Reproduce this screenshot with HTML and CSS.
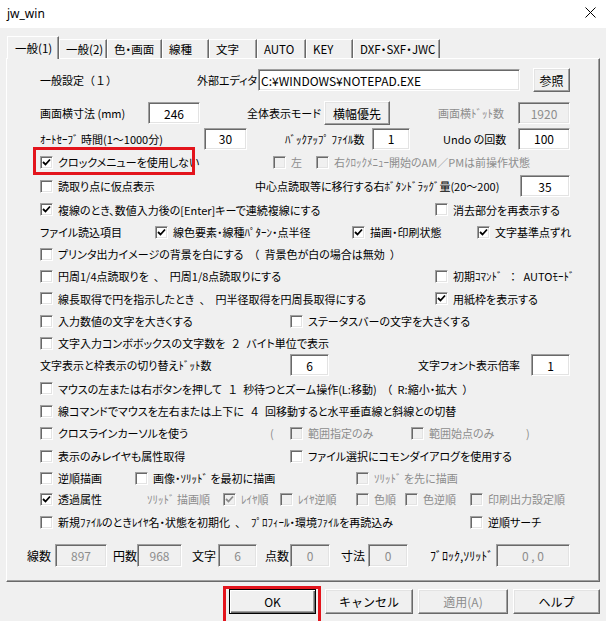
FILE: index.html
```html
<!DOCTYPE html>
<html lang="ja">
<head>
    <meta charset="UTF-8">
    <title>jw_win</title>
    <link rel="stylesheet" href="styles.css">
</head>
<body>

<div class="titlebar">
    <span class="title">jw_win</span>
    <svg class="close" width="11" height="11" viewBox="0 0 11 11"><path d="M0.5 0.5 L10.5 10.5 M10.5 0.5 L0.5 10.5" stroke="#000" stroke-width="1"/></svg>
</div>

<div class="dialog">
    <div class="tabs">
        <div class="tab on t1">一般(1)</div>
        <div class="tab t2">一般(2)</div>
        <div class="tab t3">色・画面</div>
        <div class="tab t4">線種</div>
        <div class="tab t5">文字</div>
        <div class="tab t6">AUTO</div>
        <div class="tab t7">KEY</div>
        <div class="tab t8">DXF・SXF・JWC</div>
    </div>

    <div class="panel">
        <!-- row 1 -->
        <div class="row r1">
            <span class="wide">一般設定（１）</span>
            <span>外部エディタ</span>
            <input class="tb left w-editor" type="text" value="C:¥WINDOWS¥NOTEPAD.EXE">
            <button class="btn w-ref">参照</button>
        </div>

        <div class="row r2">
            <span>画面横寸法 (mm)</span>
            <input class="tb w52" type="text" value="246">
            <span>全体表示モード</span>
            <button class="btn w-wide">横幅優先</button>
            <span class="gray">画面横ﾄﾞｯﾄ数</span>
            <input class="tb dis w52" type="text" value="1920" disabled>
        </div>

        <div class="row r3 h23">
            <span>ｵｰﾄｾｰﾌﾞ 時間(1～1000分)</span>
            <input class="tb w43" type="text" value="30">
            <span>ﾊﾞｯｸｱｯﾌﾟ ﾌｧｲﾙ数</span>
            <input class="tb w38" type="text" value="1">
            <span>Undo の回数</span>
            <input class="tb w52" type="text" value="100">
        </div>

        <div class="row r4 h24">
            <label class="chk"><span class="cb"><svg viewBox="0 0 11 11"><polyline points="2,5 4.5,7.5 9,2.5"/></svg></span>クロックメニューを使用しない</label>
            <label class="chk gray"><span class="cb dis"></span>左</label>
            <label class="chk gray"><span class="cb dis"></span>右ｸﾛｯｸﾒﾆｭｰ開始のAM／PMは前操作状態</label>
            <div class="mark mark-clock"></div>
        </div>

        <div class="row r5 h24">
            <label class="chk"><span class="cb"></span>読取り点に仮点表示</label>
            <span>中心点読取等に移行する右ﾎﾞﾀﾝﾄﾞﾗｯｸﾞ量(20～200)</span>
            <input class="tb w50" type="text" value="35">
        </div>

        <div class="row r-right h23">
            <label class="chk"><span class="cb"><svg viewBox="0 0 11 11"><polyline points="2,5 4.5,7.5 9,2.5"/></svg></span>複線のとき、数値入力後の[Enter]キーで連続複線にする</label>
            <label class="chk"><span class="cb"></span>消去部分を再表示する</label>
        </div>

        <div class="row r7">
            <span>ファイル読込項目</span>
            <label class="chk"><span class="cb"><svg viewBox="0 0 11 11"><polyline points="2,5 4.5,7.5 9,2.5"/></svg></span>線色要素・線種ﾊﾟﾀｰﾝ・点半径</label>
            <label class="chk"><span class="cb"><svg viewBox="0 0 11 11"><polyline points="2,5 4.5,7.5 9,2.5"/></svg></span>描画・印刷状態</label>
            <label class="chk"><span class="cb"><svg viewBox="0 0 11 11"><polyline points="2,5 4.5,7.5 9,2.5"/></svg></span>文字基準点ずれ</label>
        </div>

        <div class="row">
            <label class="chk"><span class="cb"></span>プリンタ出力イメージの背景を白にする<span class="wide">（</span>背景色が白の場合は無効<span class="wide">）</span></label>
        </div>

        <div class="row r-right">
            <label class="chk"><span class="cb"></span>円周1/4点読取りを<span class="wide">、</span>円周1/8点読取りにする</label>
            <label class="chk"><span class="cb"></span>初期ｺﾏﾝﾄﾞ <span class="wide">：</span>AUTOﾓｰﾄﾞ</label>
        </div>

        <div class="row r-right h23">
            <label class="chk"><span class="cb"></span>線長取得で円を指示したとき<span class="wide">、</span>円半径取得を円周長取得にする</label>
            <label class="chk"><span class="cb"><svg viewBox="0 0 11 11"><polyline points="2,5 4.5,7.5 9,2.5"/></svg></span>用紙枠を表示する</label>
        </div>

        <div class="row r-mid">
            <label class="chk"><span class="cb"></span>入力数値の文字を大きくする</label>
            <label class="chk"><span class="cb"></span>ステータスバーの文字を大きくする</label>
        </div>

        <div class="row">
            <label class="chk"><span class="cb"></span>文字入力コンボボックスの文字数を<span class="wide">２</span>バイト単位で表示</label>
        </div>

        <div class="row r13">
            <span>文字表示と枠表示の切り替えﾄﾞｯﾄ数</span>
            <input class="tb w39" type="text" value="6">
            <span>文字フォント表示倍率</span>
            <input class="tb w39" type="text" value="1">
        </div>

        <div class="row h25">
            <label class="chk"><span class="cb"></span>マウスの左または右ボタンを押して<span class="wide">１</span>秒待つとズーム操作(L:移動)<span class="wide">（</span>R:縮小・拡大<span class="wide">）</span></label>
        </div>

        <div class="row h20">
            <label class="chk"><span class="cb"></span>線コマンドでマウスを左右または上下に<span class="wide">４</span>回移動すると水平垂直線と斜線との切替</label>
        </div>

        <div class="row r16 h24">
            <label class="chk"><span class="cb"></span>クロスラインカーソルを使う</label>
            <span class="gray">(</span>
            <label class="chk gray"><span class="cb dis"></span>範囲指定のみ</label>
            <label class="chk gray"><span class="cb dis"></span>範囲始点のみ</label>
            <span class="gray">)</span>
        </div>

        <div class="row r-mid">
            <label class="chk"><span class="cb"></span>表示のみレイヤも属性取得</label>
            <label class="chk"><span class="cb"></span>ファイル選択にコモンダイアログを使用する</label>
        </div>

        <div class="row r18">
            <label class="chk"><span class="cb"></span>逆順描画</label>
            <label class="chk"><span class="cb"></span>画像・ｿﾘｯﾄﾞ を最初に描画</label>
            <label class="chk gray"><span class="cb dis"></span>ｿﾘｯﾄﾞ を先に描画</label>
        </div>

        <div class="row r19 h20">
            <label class="chk"><span class="cb"><svg viewBox="0 0 11 11"><polyline points="2,5 4.5,7.5 9,2.5"/></svg></span>透過属性</label>
            <span class="gray">ｿﾘｯﾄﾞ 描画順</span>
            <label class="chk gray"><span class="cb dis"><svg viewBox="0 0 11 11"><polyline points="2,5 4.5,7.5 9,2.5"/></svg></span>ﾚｲﾔ順</label>
            <label class="chk gray"><span class="cb dis"></span>ﾚｲﾔ逆順</label>
            <label class="chk gray"><span class="cb dis"></span>色順</label>
            <label class="chk gray"><span class="cb dis"></span>色逆順</label>
            <label class="chk gray"><span class="cb dis"></span>印刷出力設定順</label>
        </div>

        <div class="row r20 h26">
            <label class="chk"><span class="cb"></span>新規ﾌｧｲﾙのときﾚｲﾔ名・状態を初期化<span class="wide">、</span>ﾌﾟﾛﾌｨｰﾙ・環境ﾌｧｲﾙを再読込み</label>
            <label class="chk"><span class="cb"></span>逆順サーチ</label>
        </div>

        <!-- counters -->
        <div class="row stats h23">
            <span>線数</span>
            <input class="tb dis w52" type="text" value="897" disabled>
            <span>円数</span>
            <input class="tb dis w45" type="text" value="968" disabled>
            <span>文字</span>
            <input class="tb dis w39" type="text" value="6" disabled>
            <span>点数</span>
            <input class="tb dis w40" type="text" value="0" disabled>
            <span>寸法</span>
            <input class="tb dis w40" type="text" value="0" disabled>
            <span>ﾌﾞﾛｯｸ,ｿﾘｯﾄﾞ</span>
            <input class="tb dis w74" type="text" value="0 , 0" disabled>
        </div>
    </div>

    <div class="buttons">
        <div class="ok-wrap">
            <button class="btn def">OK</button>
            <div class="mark mark-ok"></div>
        </div>
        <button class="btn">キャンセル</button>
        <button class="btn" disabled>適用(A)</button>
        <button class="btn">ヘルプ</button>
    </div>
</div>

</body>
</html>
```

FILE: styles.css
```css
body {
    margin: 0;
    width: 606px;
    height: 621px;
    overflow: hidden;
    background-color: #f0f0f0;
    font-family: "Noto Sans CJK JP", sans-serif;
    font-size: 11px;
    font-feature-settings: "palt";
    color: #000;
}

/* full-width punctuation keeps its full width, as in the dialog font */
.wide {
    font-feature-settings: normal;
}

/* Title bar */
.titlebar {
    height: 28px;
    background-color: #fff;
    display: flex;
    align-items: center;
    justify-content: space-between;
    padding: 0 10px 2px 7px;
    box-sizing: border-box;
}

.title {
    font-family: "Noto Sans", sans-serif;
    font-size: 12px;
}

.close {
    margin-top: -2px;
}

.dialog {
    padding: 8px 0 0 6px;
}

/* Tabs */
.tabs {
    display: flex;
    align-items: flex-end;
    height: 22px;
    margin-left: 1px;
    font-size: 11.5px;
}

.tab {
    height: 19px;
    line-height: 18px;
    box-sizing: border-box;
    padding-left: 6px;
    border-top: 1px solid #fff;
    border-left: 1px solid #fff;
    border-right: 1px solid #696969;
    box-shadow: inset -1px 0 #a0a0a0;
    white-space: nowrap;
}

.tab.on {
    height: 23px;
    line-height: 22px;
    margin-bottom: -1px;
    padding-left: 7px;
    background-color: #f0f0f0;
    position: relative;
    z-index: 1;
}

.t1 { width: 52px; }
.t2 { width: 48px; }
.t3 { width: 55px; }
.t4 { width: 47px; }
.t5 { width: 48px; }
.t6 { width: 49px; }
.t7 { width: 47px; }
.t8 { width: 87px; }

/* Tab page */
.panel {
    width: 594px;
    box-sizing: border-box;
    border-top: 1px solid #fff;
    border-left: 1px solid #fff;
    border-right: 1px solid #696969;
    border-bottom: 1px solid #696969;
    box-shadow: inset -1px -1px #a0a0a0;
    padding: 9px 0 14px 33px;
}

.row {
    height: 22px;
    display: flex;
    align-items: center;
    white-space: nowrap;
    position: relative;
}

.row > * {
    flex: none;
}

.h20 { height: 20px; }
.h23 { height: 23px; }
.h24 { height: 24px; }
.h25 { height: 25px; }
.h26 { height: 26px; }

/* rows laid out as columns */
.r1, .r2, .r3, .r4, .r5, .r-right, .r7, .r-mid, .r13, .r16, .r18, .r19, .r20, .stats {
    display: grid;
    align-items: center;
}

.r1 { grid-template-columns: 157px 61px 275px auto; }
.r2 { grid-template-columns: 108px 99px 77px 114px 80px auto; margin-top: 11px; }
.r3 { grid-template-columns: 164px 81px 87px 71px 75px auto; margin-top: 4px; }
.r4 { grid-template-columns: 233px 43px auto; }
.r5 { grid-template-columns: 215px 265px auto; }
.r-right { grid-template-columns: 395px auto; }
.r7 { grid-template-columns: 115px 197px 125px auto; }
.r-mid { grid-template-columns: 250px auto; }
.r13 { grid-template-columns: 250px 128px 113px auto; }
.r16 { grid-template-columns: 230px 20px 121px 115px auto; }
.r18 { grid-template-columns: 95px 221px auto; }
.r19 { grid-template-columns: 107px 76px 57px 76px 49px 65px auto; }
.r20 { grid-template-columns: 430px auto; }

.stats {
    grid-template-columns: 28px 58px 24px 55px 26px 47px 25px 51px 27px 62px 66px auto;
    margin-left: -13px;
    margin-top: 9px;
    font-size: 12px;
}

.gray {
    color: #8d8d8d;
}

/* Checkboxes */
.chk {
    display: flex;
    align-items: center;
    gap: 5px;
}

.cb {
    width: 13px;
    height: 13px;
    box-sizing: border-box;
    background-color: #fff;
    border: 1px solid;
    border-color: #a0a0a0 #fff #fff #a0a0a0;
    box-shadow: inset 1px 1px #696969, inset -1px -1px #e3e3e3;
    flex: none;
}

.cb svg {
    display: block;
    width: 11px;
    height: 11px;
}

.cb polyline {
    fill: none;
    stroke: #000;
    stroke-width: 1.8;
}

.cb.dis {
    background-color: #f0f0f0;
}

.cb.dis polyline {
    stroke: #8d8d8d;
}

/* Text boxes */
.tb {
    height: 22px;
    box-sizing: border-box;
    margin: 0;
    padding: 0 3px;
    background-color: #fff;
    border: 1px solid;
    border-color: #a0a0a0 #fff #fff #a0a0a0;
    box-shadow: inset 1px 1px #696969, inset -1px -1px #e3e3e3;
    font-family: inherit;
    font-size: 12px;
    color: #000;
    text-align: center;
    outline: none;
}

.tb.left {
    text-align: left;
    padding-left: 2px;
}

.tb.dis {
    background-color: #f0f0f0;
    color: #8d8d8d;
}

.w-editor { width: 262px; }
.w38 { width: 38px; }
.w39 { width: 39px; }
.w40 { width: 40px; }
.w43 { width: 43px; }
.w45 { width: 45px; }
.w50 { width: 50px; }
.w52 { width: 52px; }
.w74 { width: 74px; }
.stats .tb { height: 23px; }

/* Buttons */
.btn {
    height: 25px;
    box-sizing: border-box;
    padding: 0;
    background-color: #f0f0f0;
    border: 1px solid;
    border-color: #fff #696969 #696969 #fff;
    box-shadow: inset -1px -1px #a0a0a0, inset 1px 1px #e3e3e3;
    font-family: inherit;
    font-size: 12px;
    color: #000;
}

.btn:disabled {
    color: #8d8d8d;
}

.w-ref { width: 37px; height: 24px; }
.w-wide { width: 66px; height: 24px; }

.buttons {
    display: flex;
    gap: 5px;
    margin-top: 7px;
    padding-left: 223px;
}

.buttons .btn {
    width: 88px;
}

.buttons .btn:nth-child(3) { width: 90px; }
.buttons .btn:nth-child(4) { width: 87px; }

.ok-wrap {
    position: relative;
    margin-right: 4px;
}

.btn.def {
    width: 87px;
    border-color: #000;
    box-shadow: inset 1px 1px #fff, inset -1px -1px #696969, inset -2px -2px #a0a0a0;
}

/* red highlight frames drawn over the dialog */
.mark {
    position: absolute;
    border: 3px solid #e3141c;
    box-sizing: border-box;
}

.mark-clock {
    left: -7px;
    top: -3px;
    width: 162px;
    height: 28px;
}

.mark-ok {
    left: -6px;
    top: -3px;
    width: 98px;
    height: 40px;
}
```
